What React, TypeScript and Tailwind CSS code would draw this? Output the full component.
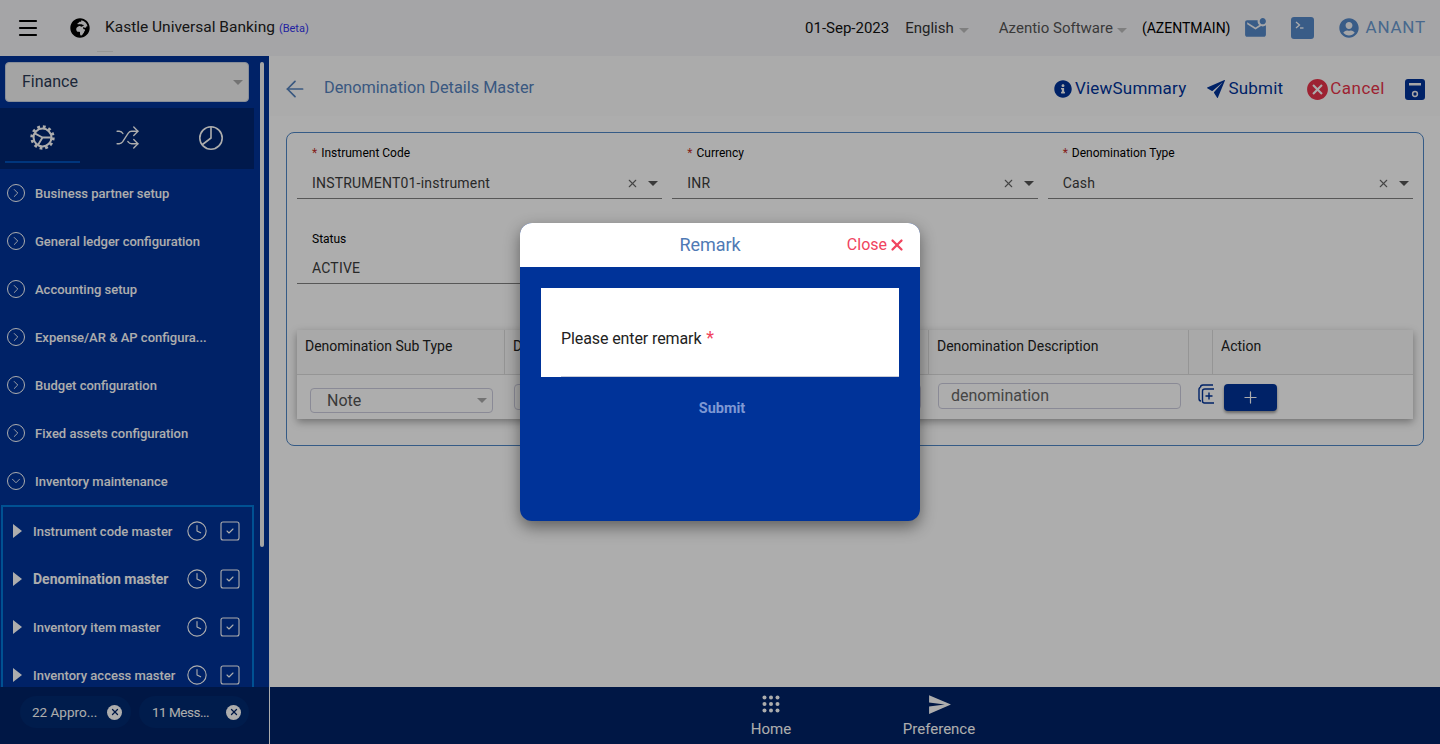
import { ArrowLeft, ChevronDown, ChevronRight, Clock, Menu, Plus, Shuffle, SquareCheck, X } from "lucide-react";
import { FaGlobeAfrica, FaInfoCircle, FaUserCircle } from "react-icons/fa";
import { IoIosSend } from "react-icons/io";
import { MdCancel, MdMarkEmailUnread, MdSend } from "react-icons/md";

const navItems = [
  "Business partner setup",
  "General ledger configuration",
  "Accounting setup",
  "Expense/AR & AP configura...",
  "Budget configuration",
  "Fixed assets configuration",
];

const subItems = [
  { label: "Instrument code master" },
  { label: "Denomination master", active: true },
  { label: "Inventory item master" },
  { label: "Inventory access master" },
];

function Caret({ className }: { className: string }) {
  return <span className={`inline-block h-0 w-0 border-x-[5px] border-t-[5px] border-x-transparent ${className}`} />;
}

function GearIcon() {
  return (
    <svg width="25" height="25" viewBox="0 0 24 24" fill="none" stroke="currentColor">
      <circle cx="12" cy="12" r="8.6" strokeWidth="2" />
      <circle cx="12" cy="12" r="10.4" strokeWidth="2.6" strokeDasharray="2.7 2.75" />
      <path d="M12 12 L4.5 8 M12 12 L20 12 M12 12 L7.5 19.5" strokeWidth="1.8" />
    </svg>
  );
}

function PieIcon() {
  return (
    <svg width="26" height="26" viewBox="0 0 26 26" fill="none" stroke="currentColor" strokeWidth="1.6">
      <circle cx="13" cy="13" r="11.2" />
      <path d="M13 2v11l-8.5 6.5" />
    </svg>
  );
}

function TerminalIcon() {
  return (
    <svg width="23" height="22" viewBox="0 0 23 22">
      <rect width="23" height="22" rx="3" fill="#5588c8" />
      <path d="M5 5l3.5 3L5 11" fill="none" stroke="#fff" strokeWidth="1.3" />
      <path d="M9 11h3.5" stroke="#fff" strokeWidth="1.3" />
    </svg>
  );
}

function SaveIcon() {
  return (
    <svg width="20" height="21" viewBox="0 0 20 21">
      <rect width="20" height="21" rx="3" fill="#003399" />
      <rect x="4" y="4" width="12" height="2.5" fill="#f5f5f5" />
      <circle cx="10" cy="15" r="2.4" fill="none" stroke="#f5f5f5" strokeWidth="1.5" />
    </svg>
  );
}

function CopyPlusIcon() {
  return (
    <svg width="16" height="20" viewBox="0 0 16 20" fill="none" stroke="#003399" strokeWidth="1.4">
      <path d="M15 1H5C3.5 1 2.5 2 2.5 3.5" />
      <path d="M2.5 3.5C1.5 3.5 1 4.5 1 5.5v9C1 16 2 17 3 17" />
      <path d="M16 5H7C5.5 5 4.5 6 4.5 7v10c0 1.2 1 2 2 2H16" />
      <path d="M11 8.5v7M7.5 12h7" />
    </svg>
  );
}

function HomeDots() {
  return (
    <svg width="18" height="18" viewBox="0 0 18 18" fill="currentColor">
      {[2.5, 9, 15.5].map((y) =>
        [2.5, 9, 15.5].map((x) => <circle key={`${x}-${y}`} cx={x} cy={y} r="2" />)
      )}
    </svg>
  );
}

function Field({ label, value, required, clearable, compact }: { label: string; value: string; required?: boolean; clearable?: boolean; compact?: boolean }) {
  return (
    <div className={`flex flex-1 flex-col border-b border-[#808080] pl-[15px] pr-[4px] ${compact ? "h-[65px]" : "h-[66px]"}`}>
      <div className="mt-[12px] h-[16px] text-[12px] leading-[16px] text-black">
        {required && <span className="mr-[4px] text-[#c4302b]">*</span>}
        {label}
      </div>
      <div className={`flex items-center justify-between ${compact ? "mt-[11px]" : "mt-[12px]"}`}>
        <span className="text-[14px] leading-[20px] tracking-[0.2px] text-[#3c3c3c]">{value}</span>
        {clearable && (
          <span className="flex items-center gap-[9px]">
            <X size={13} strokeWidth={2} color="#666" />
            <Caret className="border-t-[#555]" />
          </span>
        )}
      </div>
    </div>
  );
}

function HeaderCell({ width, label }: { width: string; label?: string }) {
  return (
    <div className={`h-full shrink-0 border-r border-[#dcdcdc] px-[8px] pt-[8px] text-[14px] leading-[16px] text-[#222] last:border-r-0 ${width}`}>
      {label}
    </div>
  );
}

function SideNav() {
  return (
    <div className="flex w-[270px] shrink-0 overflow-hidden border-r border-white bg-[#003399]">
      <div className="w-[254px] shrink-0">
        <div className="px-[5px] pt-[6px]">
          <div className="flex h-[40px] items-center justify-between rounded-[4px] border border-[#c8d0e0] bg-[#f2f2f2] pl-[16px] pr-[5px] text-[16px] text-[#2b3a55]">
            Finance
            <Caret className="border-t-[#aaa]" />
          </div>
        </div>
        <div className="mt-[6px] flex h-[61px] bg-[#002670] text-white">
          <div className="flex w-[85px] justify-center pt-[17px]">
            <div className="flex h-[38px] w-[75px] justify-center border-b-2 border-[#0050b8]">
              <GearIcon />
            </div>
          </div>
          <div className="flex w-[84px] justify-center pt-[17px]">
            <Shuffle size={25} strokeWidth={1.3} />
          </div>
          <div className="flex w-[83px] justify-center pt-[17px]">
            <PieIcon />
          </div>
        </div>
        {navItems.map((item) => (
          <div key={item} className="flex h-[48px] items-center pl-[7px] text-[13px] font-medium text-white">
            <span className="flex h-[18px] w-[18px] items-center justify-center rounded-full border border-white">
              <ChevronRight size={14} strokeWidth={1.5} />
            </span>
            <span className="ml-[10px] pt-[1px]">{item}</span>
          </div>
        ))}
        <div className="flex h-[48px] items-center pl-[7px] text-[13px] font-medium text-white">
          <span className="flex h-[18px] w-[18px] items-center justify-center rounded-full border border-white">
            <ChevronDown size={14} strokeWidth={1.5} />
          </span>
          <span className="ml-[10px] pt-[1px]">Inventory maintenance</span>
        </div>
        <div className="ml-[1px] h-[200px] w-[253px] border-2 border-[#0078d7]">
          {subItems.map((item) => (
            <div
              key={item.label}
              className={`flex h-[48px] items-center pl-[10px] text-white ${item.active ? "text-[14px] font-bold" : "text-[13px] font-medium"}`}
            >
              <span className="h-0 w-0 border-y-[7px] border-l-[9px] border-y-transparent border-l-white" />
              <span className="ml-[11px] w-[153px] whitespace-nowrap pt-[1px]">{item.label}</span>
              <Clock size={22} strokeWidth={1.2} />
              <span className="ml-[10px]">
                <SquareCheck size={24} strokeWidth={1.1} />
              </span>
            </div>
          ))}
        </div>
      </div>
      <div className="pl-[6px] pt-[6px]">
        <div className="h-[485px] w-[4px] rounded-full bg-[#f2f2f2]" />
      </div>
    </div>
  );
}

export default function App() {
  return (
    <div className="relative flex h-[744px] w-[1440px] flex-col overflow-hidden bg-white font-['Roboto',sans-serif]">
      <header className="relative flex h-[56px] shrink-0 items-center bg-[#f4f4f7] pr-[14px]">
        <span className="ml-[16px]">
          <Menu size={24} strokeWidth={2.2} color="#000" />
        </span>
        <span className="ml-[30px]">
          <FaGlobeAfrica size={20} color="#000" />
        </span>
        <span className="ml-[15px] text-[15.5px] text-[#222]">Kastle Universal Banking</span>
        <span className="ml-[4px] mt-[3px] text-[11px] text-[#3333ee]">(Beta)</span>
        <div className="ml-auto flex items-center">
          <span className="text-[15px] text-[#111]">01-Sep-2023</span>
          <span className="ml-[16px] mt-[1px] text-[15px] text-[#333]">English</span>
          <span className="ml-[5px]"><Caret className="border-t-[#bbb]" /></span>
          <span className="ml-[30px] mt-[1px] text-[15px] text-[#555]">Azentio Software</span>
          <span className="ml-[4px]"><Caret className="border-t-[#bbb]" /></span>
          <span className="ml-[15px] text-[14px] text-black">(AZENTMAIN)</span>
          <span className="ml-[12px]"><MdMarkEmailUnread size={25} color="#5588c8" /></span>
          <span className="ml-[23px]"><TerminalIcon /></span>
          <span className="ml-[25px]"><FaUserCircle size={20} color="#5588c8" /></span>
          <span className="ml-[7px] text-[17px] tracking-[0.8px] text-[#6a9ad0]">ANANT</span>
        </div>
        <span className="absolute left-[97px] top-[51px] h-px w-[16px] bg-[#ddd]" />
      </header>

      <div className="flex min-h-0 flex-1">
        <SideNav />
        <main className="min-w-0 flex-1 bg-white">
          <div className="flex h-[60px] items-center bg-[#fdfdfd] pl-[12px] pr-[15px] pt-[5px]">
            <ArrowLeft size={26} strokeWidth={1.6} color="#5582bd" />
            <span className="ml-[16px] text-[16.3px] text-[#5582bd]">Denomination Details Master</span>
            <div className="ml-auto mt-[1px] flex items-center text-[17px]">
              <FaInfoCircle size={18} color="#003399" />
              <span className="ml-[3px] tracking-[0.2px] text-[#003399]">ViewSummary</span>
              <span className="ml-[18px]"><IoIosSend size={24} color="#003399" /></span>
              <span className="tracking-[0.2px] text-[#003399]">Submit</span>
              <span className="ml-[22px]"><MdCancel size={25} color="#e8334a" /></span>
              <span className="tracking-[0.5px] text-[#e8334a]">Cancel</span>
              <span className="ml-[20px]"><SaveIcon /></span>
            </div>
          </div>

          <div className="ml-[16px] mt-[16px] h-[314px] w-[1138px] rounded-[8px] border border-[#4f86c6] px-[10px]">
            <div className="flex gap-[10px]">
              <Field label="Instrument Code" value="INSTRUMENT01-instrument" required clearable />
              <Field label="Currency" value="INR" required clearable />
              <Field label="Denomination Type" value="Cash" required clearable />
            </div>
            <div className="mt-[20px] flex w-[365px]">
              <Field label="Status" value="ACTIVE" compact />
            </div>

            <div className="mt-[46px] h-[89px] w-[1116px] bg-white shadow-[0_3px_8px_rgba(0,0,0,0.35)]">
              <div className="flex h-[45px] border-b border-[#dcdcdc] bg-[#f9f9f9]">
                <HeaderCell width="w-[208px]" label="Denomination Sub Type" />
                <HeaderCell width="w-[424px]" label="D" />
                <HeaderCell width="w-[260px]" label="Denomination Description" />
                <HeaderCell width="w-[24px]" />
                <HeaderCell width="w-[200px]" label="Action" />
              </div>
              <div className="flex h-[44px]">
                <div className="w-[208px] shrink-0 pl-[13px] pt-[13px]">
                  <div className="flex h-[25px] w-[183px] items-center justify-between rounded-[4px] border border-[#ccd] pl-[16px] pr-[5px] text-[16px] text-[#555]">
                    Note
                    <Caret className="border-t-[#aaa]" />
                  </div>
                </div>
                <div className="w-[424px] shrink-0 pl-[9px] pt-[9px]">
                  <div className="h-[26px] w-[407px] rounded-[4px] border border-[#ccd]" />
                </div>
                <div className="w-[260px] shrink-0 pl-[9px] pt-[8px]">
                  <div className="flex h-[26px] w-[243px] items-center rounded-[4px] border border-[#ccd] pl-[12px] text-[16px] text-[#666]">
                    denomination
                  </div>
                </div>
                <div className="w-[35px] shrink-0 pl-[9px] pt-[9px]">
                  <CopyPlusIcon />
                </div>
                <div className="pt-[9px]">
                  <div className="flex h-[27px] w-[53px] items-center justify-center rounded-[4px] bg-[#003399] text-white shadow-[0_2px_3px_rgba(0,0,0,0.4)]">
                    <Plus size={19} strokeWidth={1.5} />
                  </div>
                </div>
              </div>
            </div>
          </div>
        </main>
      </div>

      <footer className="flex h-[57px] shrink-0">
        <div className="flex w-[270px] shrink-0 gap-[8px] border-r border-white bg-[#002366] pl-[20px] pt-[9px]">
          <div className="flex h-[32px] w-[111px] items-center rounded-full bg-[#002a70] pl-[12px] text-[13.5px] text-white">
            22 Appro...
            <span className="ml-[10px] flex h-[15px] w-[15px] items-center justify-center rounded-full bg-white">
              <X size={10} strokeWidth={3} color="#002366" />
            </span>
          </div>
          <div className="flex h-[32px] w-[110px] items-center rounded-full bg-[#002a70] pl-[13px] text-[13.5px] tracking-[-0.5px] text-white">
            11 Mess...
            <span className="ml-[17px] flex h-[15px] w-[15px] items-center justify-center rounded-full bg-white">
              <X size={10} strokeWidth={3} color="#002366" />
            </span>
          </div>
        </div>
        <div className="flex flex-1 justify-center bg-[#002366] pt-[8px] text-white">
          <div className="flex w-[168px] flex-col items-center">
            <HomeDots />
            <span className="mt-[7px] text-[15px] leading-[18px]">Home</span>
          </div>
          <div className="flex w-[168px] flex-col items-center">
            <span className="-mt-[3px]"><MdSend size={25} /></span>
            <span className="mt-[3px] text-[15px] leading-[18px]">Preference</span>
          </div>
        </div>
      </footer>

      <div className="absolute inset-0 bg-black/32" />

      <div className="absolute inset-0 flex items-center justify-center">
        <div className="h-[298px] w-[400px] overflow-hidden rounded-[12px] bg-[#003399] shadow-[0_6px_16px_rgba(0,0,0,0.45)]">
          <div className="relative flex h-[44px] items-center justify-center bg-white">
            <span className="-ml-[20px] -mt-[1px] text-[18px] tracking-[-0.1px] text-[#4f7ab5]">Remark</span>
            <span className="absolute right-[14px] flex items-center gap-[1px] text-[16px] text-[#f0445e]">
              Close
              <X size={18} strokeWidth={3} />
            </span>
          </div>
          <div className="px-[21px] pt-[21px]">
            <div className="h-[89px] bg-white pl-[20px]">
              <div className="h-full border-b border-[#c8ccd8] pt-[41px] text-[16px] leading-[20px] tracking-[-0.1px] text-[#222]">
                Please enter remark <span className="ml-[1px] text-[18px] leading-[16px] text-[#f0445e]">*</span>
              </div>
            </div>
            <div className="mt-[22px] pl-[4px] text-center text-[14.5px] font-bold leading-[20px] text-[#7e98d4]">Submit</div>
          </div>
        </div>
      </div>
    </div>
  );
}
